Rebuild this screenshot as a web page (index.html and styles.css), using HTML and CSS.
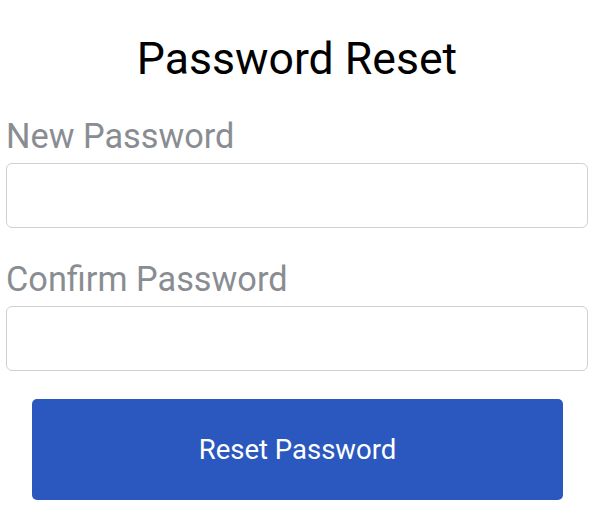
FILE: index.html
```html
<!DOCTYPE html>
<html lang="en">
<head>
<meta charset="UTF-8">
<meta name="viewport" content="width=device-width, initial-scale=1">
<title>Password Reset</title>
<link rel="stylesheet" href="styles.css">
</head>
<body>
<div class="container">
  <h2>Password Reset</h2>
  <form id="resetForm">
    <label for="newPassword">New Password</label>
    <input type="password" id="newPassword">

    <label for="confirmPassword">Confirm Password</label>
    <input type="password" id="confirmPassword">

    <button type="submit">Reset Password</button>
  </form>
</div>
</body>
</html>
```

FILE: styles.css
```css
* { box-sizing: border-box; font-family: Roboto, "Liberation Sans", sans-serif; }
body { background: #fff; margin: 0; padding: 0 5px 0 6px; }
.container { padding-top: 37px; }
h2 { text-align: center; font-size: 44.6px; font-weight: 400; margin: 0 0 37px; color: #000; line-height: 1; }
label { display: block; font-size: 34.3px; color: #898d92; line-height: 1; margin-bottom: 10px; }
input { display: block; width: 100%; height: 65px; border: 1px solid #d0d0d0; border-radius: 6px; margin-bottom: 34px; }
button { display: block; width: calc(100% - 51px); margin: -6px 25px 0 26px; height: 101px; background: #2a58be; color: #fff; border: none; border-radius: 5px; font-size: 27.5px; }
```
